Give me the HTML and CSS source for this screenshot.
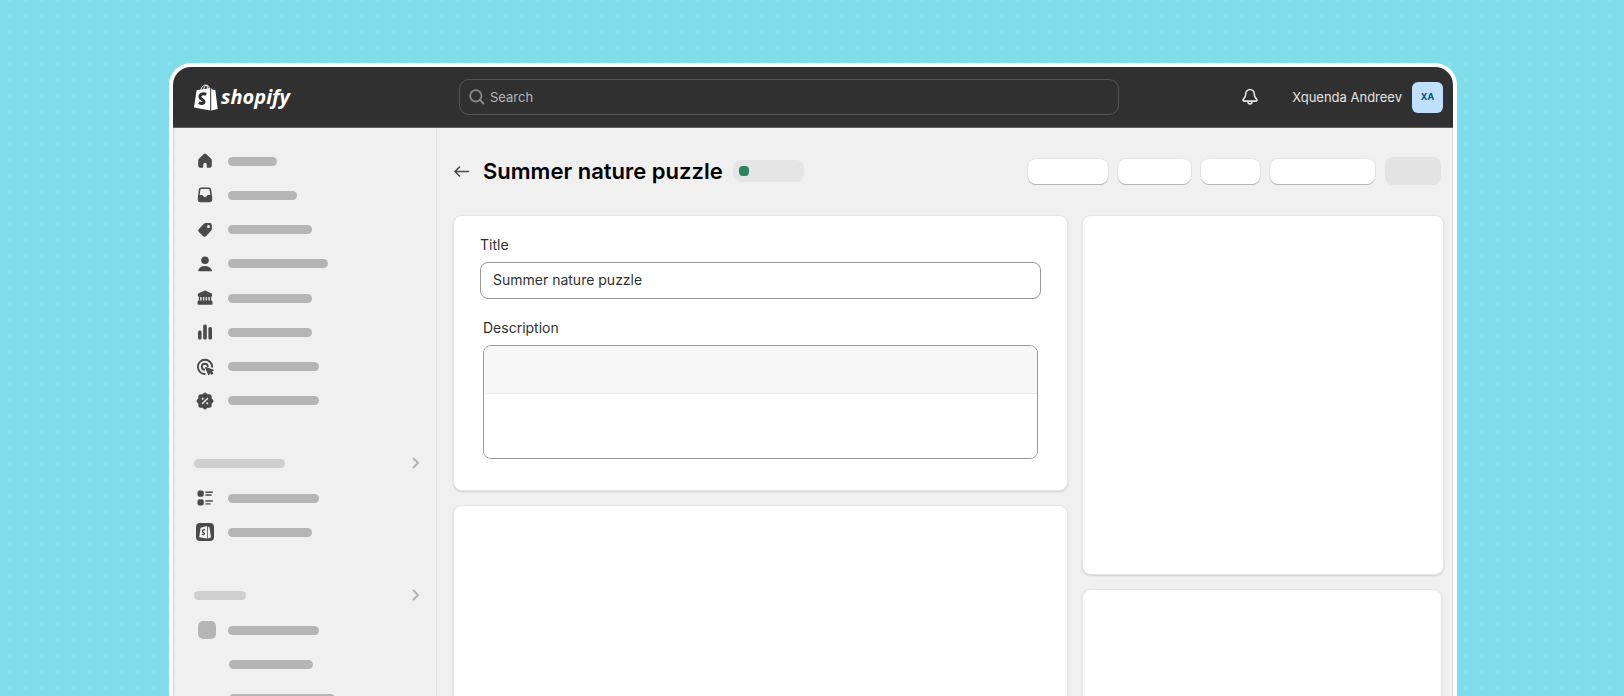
FILE: index.html
```
<!DOCTYPE html>
<html lang="en">
<head>
    <meta charset="UTF-8">
    <meta name="viewport" content="width=device-width, initial-scale=1.0">
    <title>Summer nature puzzle</title>
    <link rel="stylesheet" href="styles.css">
</head>
<body>
    <div class="window">
        <header class="topbar">
            <a class="logo" href="#">
                <svg class="logo-bag" width="24" height="27" viewBox="0 0 24 27">
                    <path d="M6.500 7.500C7 3.800 9 1.200 11.200 1.100c1.800 0 2.800 2 2.900 5M9.500 6.500C9.800 3.500 11.300 1 13 1.200c1.400.2 2.200 1.600 2.500 4" fill="none" stroke="#fff" stroke-width="1"/>
                    <path d="M2.600 6.200 16.200 4v22.600L0 23.500z" fill="#fff"/>
                    <path d="M17.200 4.200l1.600 1.500 2.500.3L23.700 25l-6.500 1.500z" fill="#fff"/>
                    <path d="M12.200 10.300c-3.300-1.500-6.400.2-6.300 2.600.1 2.700 4.200 2.600 4.100 4.900-.1 2-2.800 2.400-5 .7" fill="none" stroke="#303030" stroke-width="3"/>
                </svg>
                <span>shopify</span>
            </a>
            <label class="search">
                <svg width="16" height="16" viewBox="0 0 16 16" fill="none" stroke="#8a8a8a" stroke-width="1.800" stroke-linecap="round">
                    <circle cx="6.800" cy="6.800" r="5.700"/>
                    <path d="M11 11l3.500 3.500"/>
                </svg>
                <input type="search" placeholder="Search" aria-label="Search">
            </label>
            <div class="account">
                <button class="bell" type="button" aria-label="Notifications">
                    <svg width="16" height="18" viewBox="0 0 16 18" fill="none" stroke="#e3e3e3" stroke-width="1.600" stroke-linejoin="round" stroke-linecap="round">
                        <path d="M8 1.500c-2.600 0-4.200 2-4.200 4.300 0 3-1 4-2.300 5.300-.8.900-.4 2 .7 2h11.600c1.100 0 1.500-1.100.7-2-1.300-1.300-2.300-2.300-2.300-5.300C12.200 3.500 10.600 1.500 8 1.500z"/>
                        <path d="M6 13.500c0 3.200 4 3.200 4 0"/>
                    </svg>
                </button>
                <span class="user-name">Xquenda Andreev</span>
                <span class="avatar">XA</span>
            </div>
        </header>

        <div class="layout">
            <nav class="sidebar">
                <ul class="nav-list nav-main">
                    <li><svg class="icon" viewBox="0 0 18 18"><path d="M7.600 2.200a2 2 0 0 1 2.800 0l4.500 4.300c.6.600.9 1.200.9 2v5.300c0 1.100-.9 2-2 2h-2.300a.8.800 0 0 1-.8-.8v-2.500a1.700 1.700 0 0 0-3.400 0V15c0 .4-.4.800-.8.800H4.200c-1.100 0-2-.9-2-2V8.500c0-.8.300-1.400.9-2z"/></svg><span class="bar w49"></span></li>
                    <li><svg class="icon" viewBox="0 0 18 18"><path fill-rule="evenodd" d="M5.300 1.500h7.400c1.500 0 2.300.8 2.500 2.200l1 8v1.800a2.800 2.800 0 0 1-2.800 2.800H4.600a2.800 2.800 0 0 1-2.800-2.800v-1.800l1-8c.2-1.400 1-2.200 2.500-2.200zm.3 1.600c-.8 0-1.200.4-1.300 1.100L3.700 9h2.200c1.300 0 1.100 2 3.100 2s1.800-2 3.100-2h2.200l-.6-4.800c-.1-.7-.5-1.100-1.300-1.100z"/></svg><span class="bar w69"></span></li>
                    <li><svg class="icon" viewBox="0 0 18 18"><path fill-rule="evenodd" d="M9.800 2h3.700A2.300 2.300 0 0 1 15.900 4.400v3.400c0 .8-.3 1.400-.8 1.900l-5 5.300a2.200 2.200 0 0 1-3.200 0l-4-3.900a2.200 2.200 0 0 1 0-3.200l5-5.100c.5-.5 1.100-.8 1.900-.8zm2.700 2a1.500 1.500 0 1 0 0 3 1.500 1.500 0 0 0 0-3z"/></svg><span class="bar w84"></span></li>
                    <li><svg class="icon" viewBox="0 0 18 18"><circle cx="9" cy="5.200" r="3.800"/><path d="M2.600 16.200c-.5 0-.8-.4-.5-.9C3.300 12.300 6 10.900 9 10.900s5.700 1.400 6.900 4.400c.3.500 0 .9-.5.900z"/></svg><span class="bar w100"></span></li>
                    <li><svg class="icon" viewBox="0 0 18 18"><path fill-rule="evenodd" d="M8.300 1.700c.5-.2.900-.2 1.400 0l5.600 2.500c.6.300.9.800.9 1.400v1c0 .7-.4 1.100-1 1.200v3.700c.8.200 1.300.9 1.300 1.700v1.700c0 .5-.3.800-.8.800H2.300a.8.800 0 0 1-.8-.8v-1.700c0-.8.500-1.500 1.300-1.700V7.800c-.6-.1-1-.5-1-1.200v-1c0-.6.300-1.100.9-1.400zM4.200 8v3.500h1.400V8zm2.900 0v3.500h1.200V8zm2.600 0v3.500h1.200V8zm2.700 0v3.500h1.400V8z"/></svg><span class="bar w84"></span></li>
                    <li><svg class="icon" viewBox="0 0 18 18"><rect x="2" y="7.500" width="3.600" height="9" rx="1.500"/><rect x="7.200" y="1.500" width="3.600" height="15" rx="1.500"/><rect x="12.400" y="4" width="3.600" height="12.500" rx="1.500"/></svg><span class="bar w84"></span></li>
                    <li><svg class="icon" viewBox="0 0 18 18"><path d="M8.800 16a7.100 7.100 0 1 1 7.300-7.300M8.200 11.700a3 3 0 1 1 3.600-3.500" fill="none" stroke="#4a4a4a" stroke-width="1.900" stroke-linecap="round"/><path d="M9.200 9.900c-.2-.6.300-1 .8-.8l7.200 2.500c.7.300.7 1 .1 1.300l-1.400.7 1.600 1.700-1.700 1.700-1.700-1.700-.7 1.500c-.3.600-1 .6-1.300-.1z"/></svg><span class="bar w91"></span></li>
                    <li><svg class="icon" viewBox="0 0 18 18"><path d="M7.600 1.200a2 2 0 0 1 2.800 0l1.100 1.100h1.700a2.500 2.500 0 0 1 2.500 2.500v1.700l1.100 1.100a2 2 0 0 1 0 2.800l-1.100 1.100v1.700a2.500 2.500 0 0 1-2.500 2.500h-1.700l-1.100 1.100a2 2 0 0 1-2.800 0l-1.100-1.100H4.800a2.500 2.500 0 0 1-2.500-2.500v-1.700l-1.100-1.100a2 2 0 0 1 0-2.800l1.100-1.100V4.800a2.500 2.500 0 0 1 2.500-2.500h1.700z"/><path d="M6.500 11.500l5-5" stroke="#f0f0f0" stroke-width="1.400" stroke-linecap="round"/><circle cx="6.700" cy="6.700" r="1" fill="#f0f0f0"/><circle cx="11.300" cy="11.300" r="1" fill="#f0f0f0"/></svg><span class="bar w91"></span></li>
                </ul>

                <div class="nav-heading">
                    <span class="bar bar-light w91"></span>
                    <svg class="chevron" viewBox="0 0 8 12"><path d="M1.500 1.500 6 6l-4.500 4.500"/></svg>
                </div>
                <ul class="nav-list">
                    <li><svg class="icon" viewBox="0 0 18 18"><rect x="1.500" y="1.500" width="6.300" height="6.300" rx="2"/><rect x="1.500" y="10.300" width="6.300" height="6.300" rx="2"/><path d="M9.900 3.200h6.400M9.900 6h5.200M9.900 12h6.400M9.900 14.900h4.200" stroke="#4a4a4a" stroke-width="1.400" stroke-linecap="round"/></svg><span class="bar w91"></span></li>
                    <li><svg class="icon" viewBox="0 0 18 18"><rect width="18" height="18" rx="4"/><path d="M4.600 4.800 11 3l.1 12.500-7.900-1.300z M11.800 3.600l1.700.8 1.500 10.100-3.200.9z" fill="#f0f0f0"/><path d="M9.200 6.800c-1.600-.6-2.800.2-2.700 1.300.1 1.300 2 1.400 1.900 2.600-.1 1.100-1.400 1.200-2.400.4" fill="none" stroke="#4a4a4a" stroke-width="1.300"/></svg><span class="bar w84"></span></li>
                </ul>

                <div class="nav-heading">
                    <span class="bar bar-light w52"></span>
                    <svg class="chevron" viewBox="0 0 8 12"><path d="M1.500 1.500 6 6l-4.500 4.500"/></svg>
                </div>
                <ul class="nav-list nav-apps">
                    <li><span class="app"></span><span class="bar w91"></span></li>
                    <li><span class="bar w84"></span></li>
                    <li><span class="bar w106"></span></li>
                </ul>
            </nav>

            <main class="page">
                <div class="page-header">
                    <a class="back" href="#" aria-label="Back">
                        <svg width="16" height="14" viewBox="0 0 16 14" fill="none" stroke="#4a4a4a" stroke-width="1.600" stroke-linecap="round" stroke-linejoin="round"><path d="M14.500 7.500H1.200M5.500 3 1 7.500l4.500 4.500"/></svg>
                    </a>
                    <h1>Summer nature puzzle</h1>
                    <span class="status"></span>
                    <div class="actions">
                        <button class="action w80" type="button" aria-label="Duplicate"></button>
                        <button class="action w73" type="button" aria-label="View"></button>
                        <button class="action w59" type="button" aria-label="Share"></button>
                        <button class="action w105" type="button" aria-label="More actions"></button>
                        <button class="save" type="button" aria-label="Save" disabled></button>
                    </div>
                </div>

                <div class="columns">
                    <div class="column">
                        <section class="card form-card">
                            <div class="form-group">
                                <label for="title">Title</label>
                                <input type="text" id="title" name="title" value="Summer nature puzzle">
                            </div>
                            <div class="form-group form-description">
                                <label for="description">Description</label>
                                <div class="editor">
                                    <div class="editor-toolbar"></div>
                                    <textarea id="description" name="description"></textarea>
                                </div>
                            </div>
                        </section>
                        <section class="card card-rest"></section>
                    </div>
                    <div class="column">
                        <section class="card card-side"></section>
                        <section class="card card-rest card-narrow"></section>
                    </div>
                </div>
            </main>
        </div>
    </div>
</body>
</html>
```
FILE: styles.css
```
* {
    box-sizing: border-box;
}
body {
    margin: 0;
    height: 100vh;
    overflow: hidden;
    padding: 63px 167px 0 169px;
    display: flex;
    font-family: Inter, "Liberation Sans", sans-serif;
    font-size: 14px;
    line-height: 20px;
    color: #303030;
    background-color: #7fdde9;
    /* 4px dots on a 16px grid */
    background-image: url("data:image/svg+xml,%3Csvg xmlns='http://www.w3.org/2000/svg' width='16' height='16'%3E%3Crect x='8' y='14' width='4' height='2' fill='%238ae1eb'/%3E%3Crect x='8' width='4' height='2' fill='%238ae1eb'/%3E%3C/svg%3E");
    background-size: 16px 16px;
}
.window {
    flex: 1;
    display: flex;
    flex-direction: column;
    border: 4px solid #fff;
    border-bottom: 0;
    border-radius: 22px 22px 0 0;
    background: #f0f0f0;
    overflow: hidden;
}

/* top bar */
.topbar {
    display: flex;
    align-items: center;
    height: 61px;
    padding: 0 10px 0 21px;
    background: #303030;
    border-bottom: 1px solid #616161;
}
.logo {
    display: flex;
    align-items: center;
    gap: 3px;
    width: 265px;
    color: #fff;
    text-decoration: none;
    font: italic bold 20px/26px "Open Sans", sans-serif;
}
.search {
    display: flex;
    align-items: center;
    gap: 5px;
    flex: 0 1 660px;
    height: 36px;
    padding: 0 9px;
    border: 1px solid #555;
    border-radius: 10px;
}
.search input {
    flex: 1;
    border: 0;
    padding: 0;
    outline: 0;
    background: none;
    font: inherit;
    font-size: 13px;
    color: #b5b5b5;
}
.search input::placeholder {
    color: #b5b5b5;
}
.account {
    display: flex;
    align-items: center;
    margin-left: auto;
}
.bell {
    display: flex;
    padding: 0;
    margin-right: 34px;
    border: 0;
    background: none;
}
.user-name {
    margin-right: 10px;
    color: #e3e3e3;
    font-size: 13px;
}
.avatar {
    width: 31px;
    height: 31px;
    border-radius: 6px;
    background: #bfe0ff;
    color: #00527c;
    font-size: 9px;
    font-weight: 700;
    line-height: 30px;
    text-align: center;
}

/* sidebar */
.layout {
    flex: 1;
    display: flex;
    min-height: 0;
    border: 1px solid #d6d6d6;
    border-width: 0 1px;
}
.sidebar {
    flex: 0 0 263px;
    padding: 16px 16px 0 20px;
    border-right: 1px solid #e5e5e5;
    overflow: hidden;
}
.nav-list {
    display: grid;
    grid-auto-rows: 34px;
    margin: 1px 0 29px;
    padding: 0 0 0 2px;
    list-style: none;
}
.nav-list li {
    display: flex;
    align-items: center;
    gap: 14px;
}
.nav-main {
    grid-auto-rows: 1fr;
    height: 274px;
    margin: 0 0 28px;
}
.nav-apps {
    padding-left: 4px;
}
.nav-apps li {
    gap: 12px;
}
.nav-apps li + li {
    padding-left: 31px;
}
.icon {
    width: 18px;
    height: 18px;
    fill: #4a4a4a;
}
.nav-heading {
    display: flex;
    align-items: center;
    justify-content: space-between;
    height: 34px;
}
.chevron {
    width: 8px;
    height: 12px;
    fill: none;
    stroke: #b5b5b5;
    stroke-width: 2;
    stroke-linecap: round;
    stroke-linejoin: round;
}
.bar {
    height: 9px;
    border-radius: 5px;
    background: #b5b5b5;
}
.bar-light {
    background: #cfcfcf;
}
.app {
    width: 18px;
    height: 18px;
    border-radius: 5px;
    background: #b5b5b5;
}
.w49 { width: 49px; }
.w52 { width: 52px; }
.w59 { width: 59px; }
.w69 { width: 69px; }
.w73 { width: 73px; }
.w80 { width: 80px; }
.w84 { width: 84px; }
.w91 { width: 91px; }
.w100 { width: 100px; }
.w105 { width: 105px; }
.w106 { width: 106px; }

/* page */
.page {
    flex: 1;
    display: flex;
    flex-direction: column;
    padding: 27px 9px 0 17px;
}
.page-header {
    display: flex;
    align-items: center;
    height: 32px;
    margin-bottom: 29px;
}
.back {
    display: flex;
    margin-right: 13px;
}
h1 {
    margin: 0 10px 0 0;
    color: #000;
    font-size: 22px;
    line-height: 28px;
    font-weight: 600;
}
.status {
    width: 71px;
    height: 22px;
    padding: 6px;
    border-radius: 8px;
    background: #e5e5e5;
}
.status::before {
    content: "";
    display: block;
    width: 10px;
    height: 10px;
    border-radius: 4px;
    background: #29845a;
}
.actions {
    display: flex;
    align-items: center;
    gap: 10px;
    margin-left: auto;
    padding-right: 2px;
}
.action {
    height: 25px;
    padding: 0;
    border: 0;
    border-radius: 8px;
    background: #fff;
    box-shadow: 0 1px 0 0 #b5b5b5, 0 0 0 1px #e3e3e3;
}
.save {
    width: 56px;
    height: 28px;
    border: 0;
    border-radius: 8px;
    background: #e3e3e3;
}
.columns {
    flex: 1;
    display: grid;
    grid-template-columns: 17fr 10fr;
    gap: 16px;
}
.column {
    display: flex;
    flex-direction: column;
    gap: 16px;
}
.card {
    border-radius: 8px;
    background: #fff;
    box-shadow: 0 0 0 1px #e6e6e6, 0 1px 2px 1px #ccc;
}
.form-card {
    height: 274px;
    padding: 19px 26px;
}
.card-side {
    height: 358px;
}
.card-rest {
    flex: 1;
    border-radius: 8px 8px 0 0;
}
.card-narrow {
    margin-right: 2px;
}
.form-group label {
    display: block;
    margin-bottom: 7px;
}
.form-group input {
    display: block;
    width: 100%;
    height: 37px;
    padding: 0 12px 2px;
    border: 1px solid #999;
    border-radius: 8px;
    font: inherit;
    color: inherit;
}
.form-description {
    margin-top: 19px;
    padding: 0 3px;
}
.editor {
    border: 1px solid #999;
    border-radius: 8px;
    overflow: hidden;
}
.editor-toolbar {
    height: 48px;
    background: #f7f7f7;
    border-bottom: 1px solid #ebebeb;
}
.editor textarea {
    display: block;
    width: 100%;
    height: 64px;
    padding: 8px 12px;
    border: 0;
    outline: 0;
    resize: none;
    font: inherit;
}
```
